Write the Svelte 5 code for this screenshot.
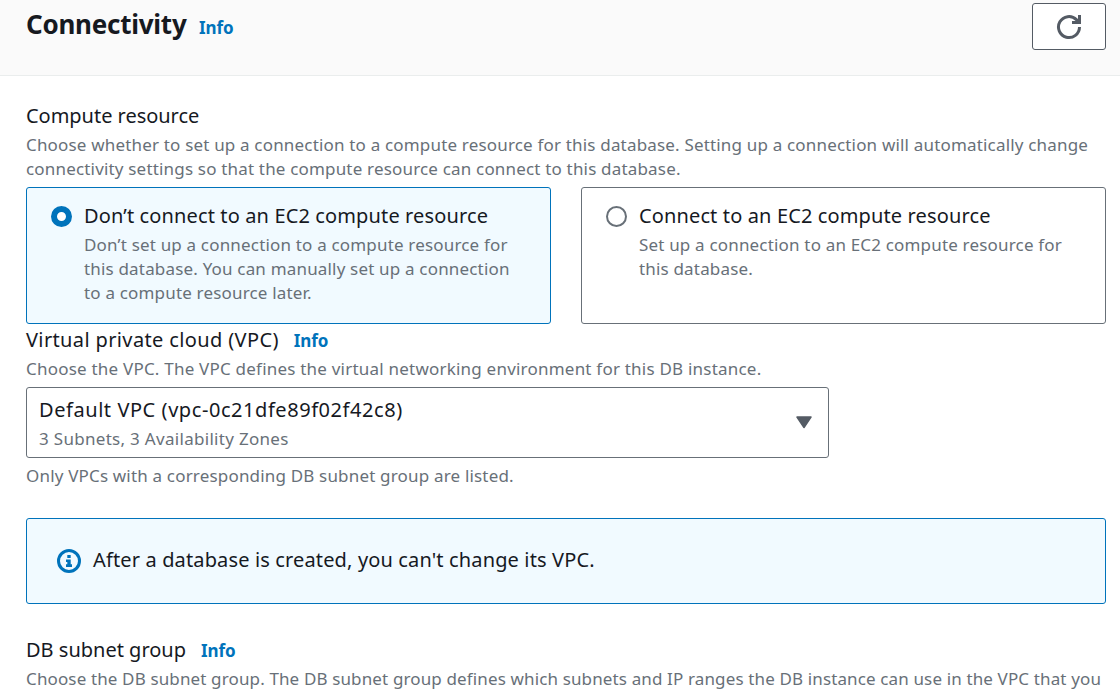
<script>
  let choice = $state('none');
  const options = [
    {
      id: 'none',
      title: 'Don’t connect to an EC2 compute resource',
      lines: [
        'Don’t set up a connection to a compute resource for',
        'this database. You can manually set up a connection',
        'to a compute resource later.'
      ]
    },
    {
      id: 'ec2',
      title: 'Connect to an EC2 compute resource',
      lines: ['Set up a connection to an EC2 compute resource for', 'this database.']
    }
  ];
</script>

<div class="page">
  <header>
    <h2>Connectivity</h2>
    <a class="info">Info</a>
    <button class="refresh" aria-label="Refresh">
      <svg width="26" height="27" viewBox="0 0 26 27" fill="none" stroke="#545b64" stroke-width="3">
        <path d="M23.5 14A10.5 10.5 0 1 1 20.4 6.6L22.5 8.7" />
        <path d="M23.5 2v7.5H16" />
        <path d="M22.5 5.5V9H18.5Z" fill="#545b64" stroke="none" />
      </svg>
    </button>
  </header>

  <main>
    <section>
      <div class="label compute">Compute resource</div>
      <div class="hint">
        Choose whether to set up a connection to a compute resource for this database. Setting up a connection will automatically change<br />connectivity settings so that the compute resource can connect to this database.
      </div>
      <div class="tiles">
        {#each options as o}
          <div class="tile" class:selected={choice === o.id} onclick={() => (choice = o.id)} role="radio" aria-checked={choice === o.id} tabindex="-1">
            <span class="radio"></span>
            <div>
              <div class="label title">{o.title}</div>
              {#each o.lines as line}<div class="hint">{line}</div>{/each}
            </div>
          </div>
        {/each}
      </div>
    </section>

    <section>
      <div class="label vpc">Virtual private cloud (VPC)<a class="info">Info</a></div>
      <div class="hint choose-vpc">Choose the VPC. The VPC defines the virtual networking environment for this DB instance.</div>
      <div class="select">
        <div>
          <div class="label value">Default VPC (vpc-0c21dfe89f02f42c8)</div>
          <div class="hint zones">3 Subnets, 3 Availability Zones</div>
        </div>
        <svg width="16" height="13" viewBox="0 0 16 13"><path d="M1 1h14L8 11.5Z" fill="#545b64" stroke="#545b64" stroke-width="1.5" stroke-linejoin="round" /></svg>
      </div>
      <div class="hint note">Only VPCs with a corresponding DB subnet group are listed.</div>
    </section>

    <div class="alert">
      <svg width="24" height="24" viewBox="0 0 24 24">
        <circle cx="12" cy="12" r="10.5" fill="none" stroke="#0073bb" stroke-width="3" />
        <path d="M10.3 6h3.4v3h-3.4zM9 10.5h4.7V15.2H15V18H9v-2.8h1.3V13H9z" fill="#0073bb" />
      </svg>
      <span class="label">After a database is created, you can't change its VPC.</span>
    </div>

    <section>
      <div class="label group">DB subnet group<a class="info">Info</a></div>
      <div class="hint choose-group">
        Choose the DB subnet group. The DB subnet group defines which subnets and IP ranges the DB instance can use in the VPC that you<br />selected.
      </div>
    </section>
  </main>
</div>

<style>
  :global(body) {
    overflow: hidden;
  }
  .page {
    height: 696px;
    overflow: hidden;
    background: #fff;
    color: #16191f;
    font-family: 'Noto Sans', sans-serif;
  }
  header {
    box-sizing: border-box;
    height: 76px;
    padding: 3px 14px 0 26px;
    display: flex;
    align-items: flex-start;
    background: #fafafa;
    border-bottom: 1px solid #eaeded;
  }
  h2 {
    margin: 0;
    font-size: 26px;
    line-height: 43px;
    letter-spacing: -0.25px;
  }
  .info {
    font-size: 17px;
    line-height: 1;
    font-weight: 700;
    letter-spacing: -0.1px;
    color: #0073bb;
    margin-left: 15px;
  }
  header .info {
    line-height: 49px;
    margin-left: 12.5px;
  }
  .refresh {
    box-sizing: border-box;
    width: 74px;
    height: 47px;
    margin-left: auto;
    padding: 0;
    display: flex;
    align-items: center;
    justify-content: center;
    background: #fff;
    border: 1px solid #545b64;
    border-radius: 3px;
  }
  main {
    padding: 25px 14px 0 26px;
  }
  .label {
    font-size: 20px;
    line-height: 30px;
    letter-spacing: 0.14px;
    white-space: nowrap;
  }
  .label.compute {
    letter-spacing: -0.03px;
  }
  .label.title {
    letter-spacing: 0.13px;
  }
  .label.vpc {
    padding-top: 1px;
    letter-spacing: 0.37px;
  }
  .label.value {
    letter-spacing: 0.56px;
  }
  .label.group {
    padding-top: 1px;
    letter-spacing: 0;
  }
  .hint {
    font-size: 17px;
    line-height: 24px;
    letter-spacing: 0.178px;
    color: #687078;
    white-space: nowrap;
  }
  .label + .hint {
    margin-top: 2px;
  }
  .choose-vpc {
    letter-spacing: 0.215px;
  }
  .label + .choose-group {
    line-height: 23px;
    letter-spacing: 0.135px;
  }
  .zones {
    letter-spacing: 0.3px;
  }
  .tiles {
    display: grid;
    grid-template-columns: 1fr 1fr;
    gap: 30px;
    margin-top: 6px;
  }
  .tile {
    box-sizing: border-box;
    height: 137px;
    padding: 13px 24px 11px;
    display: flex;
    gap: 12px;
    border: 1px solid #687078;
    border-radius: 3px;
  }
  .tile.selected {
    background: #f1faff;
    border-color: #0073bb;
  }
  .radio {
    box-sizing: border-box;
    flex: none;
    width: 21px;
    height: 21px;
    margin-top: 5px;
    border: 2px solid #687078;
    border-radius: 50%;
    background: #fff;
  }
  .selected .radio {
    border: 6px solid #0073bb;
  }
  .select {
    box-sizing: border-box;
    width: 803px;
    height: 71px;
    margin-top: 6px;
    padding: 7px 16px 0 12px;
    display: flex;
    justify-content: space-between;
    border: 1px solid #687078;
    border-radius: 3px;
  }
  .select svg {
    margin-top: 21px;
  }
  .note {
    margin-top: 6px;
  }
  .alert {
    box-sizing: border-box;
    height: 86px;
    margin: 30px 0;
    padding: 0 30px 2px;
    display: flex;
    align-items: center;
    gap: 12px;
    background: #f1faff;
    border: 1px solid #0073bb;
    border-radius: 3px;
  }
  .alert svg {
    margin-top: 2px;
  }
</style>
